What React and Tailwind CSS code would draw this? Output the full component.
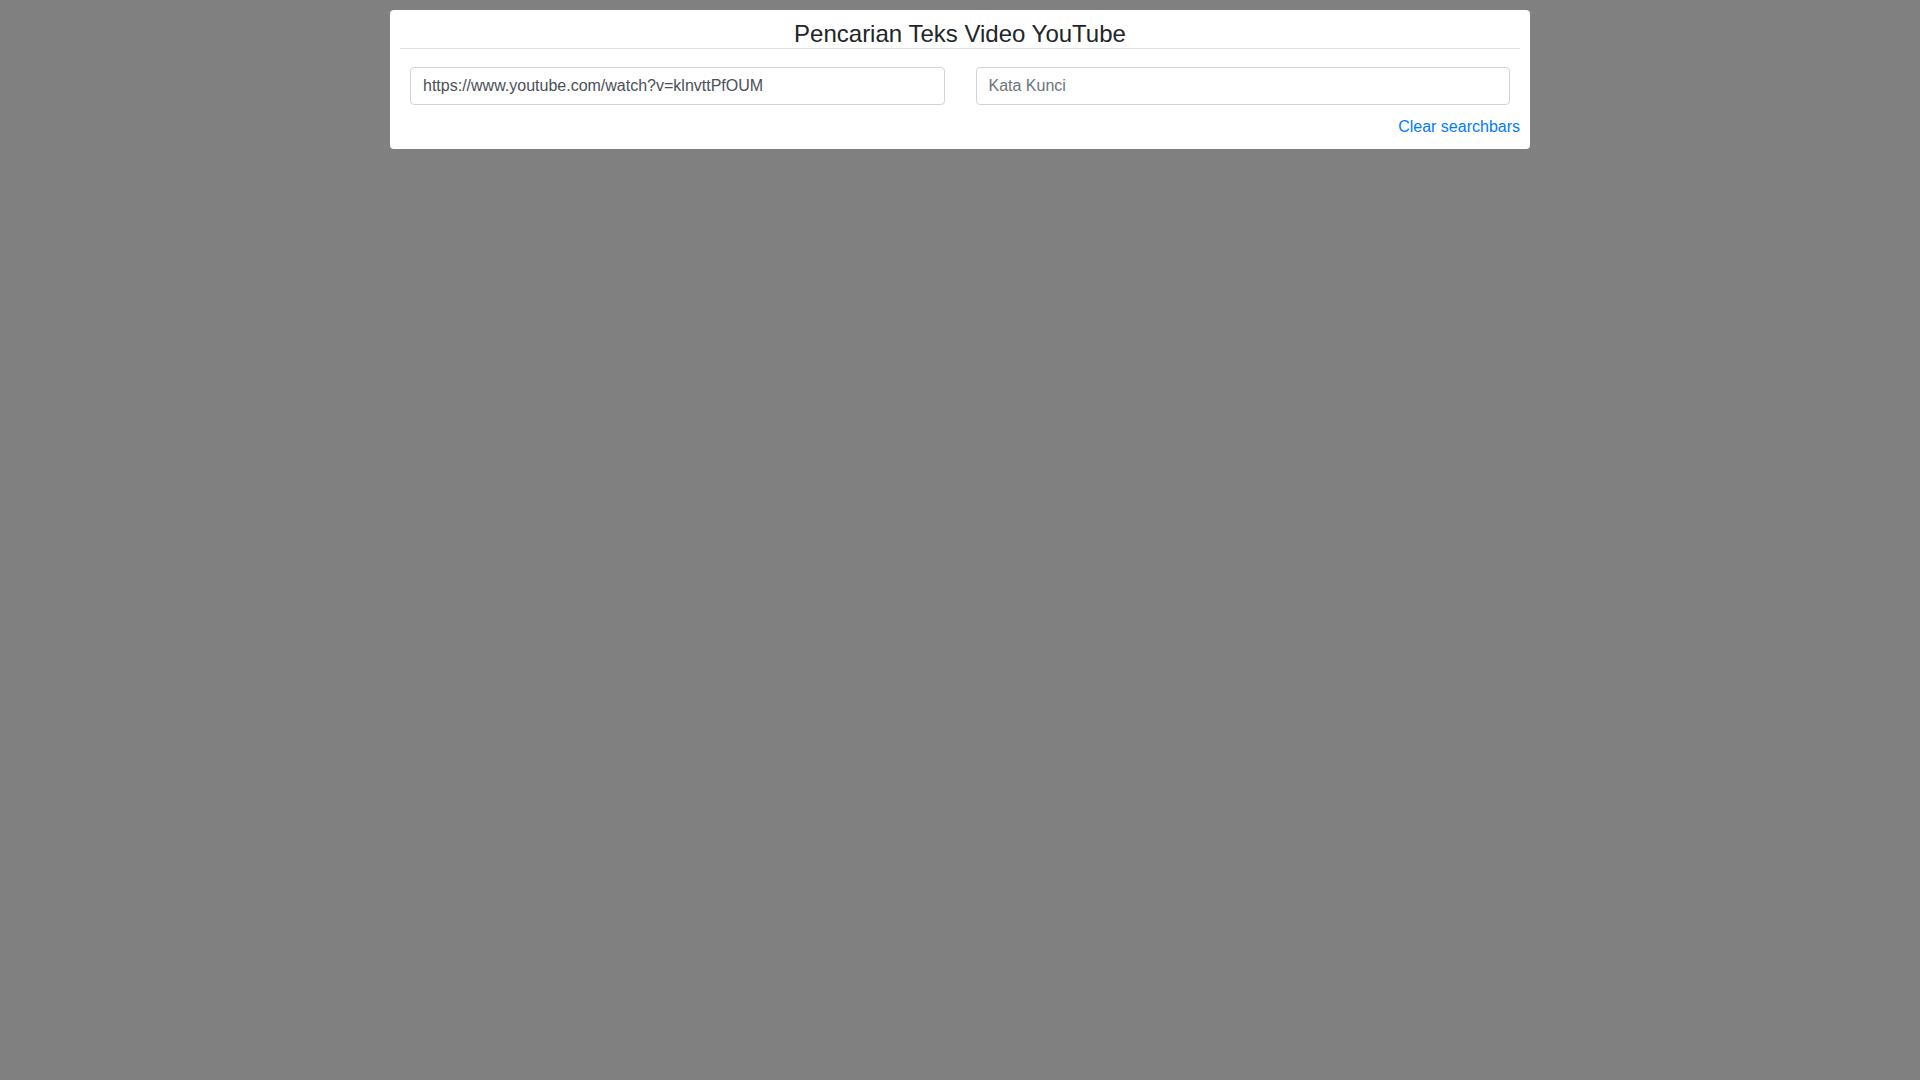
export default function App() {
  return (
    <div className="min-h-screen bg-[#808080] pt-[10px]" style={{ fontFamily: '"Liberation Sans", Arial, sans-serif' }}>
      <div className="mx-auto w-[1140px] rounded-[4px] bg-white p-[10px]">
        <div className="border-b border-[#dee2e6] text-center text-[24px] leading-[28px] text-[#212529]">
          Pencarian Teks Video YouTube
        </div>
        <div className="mt-[18px] grid grid-cols-2 gap-[31px] px-[10px]">
          <input
            className="h-[38px] w-full rounded-[4px] border border-[#ced4da] px-[12px] text-[16px] text-[#495057] outline-none"
            defaultValue="https://www.youtube.com/watch?v=klnvttPfOUM"
          />
          <input
            className="h-[38px] w-full rounded-[4px] border border-[#ced4da] px-[12px] text-[16px] text-[#495057] placeholder:text-[#6c757d] outline-none"
            placeholder="Kata Kunci"
          />
        </div>
        <div className="mt-[10px] text-right text-[16px] leading-[24px]">
          <a href="#" className="text-[#007bff]">Clear searchbars</a>
        </div>
      </div>
    </div>
  );
}
